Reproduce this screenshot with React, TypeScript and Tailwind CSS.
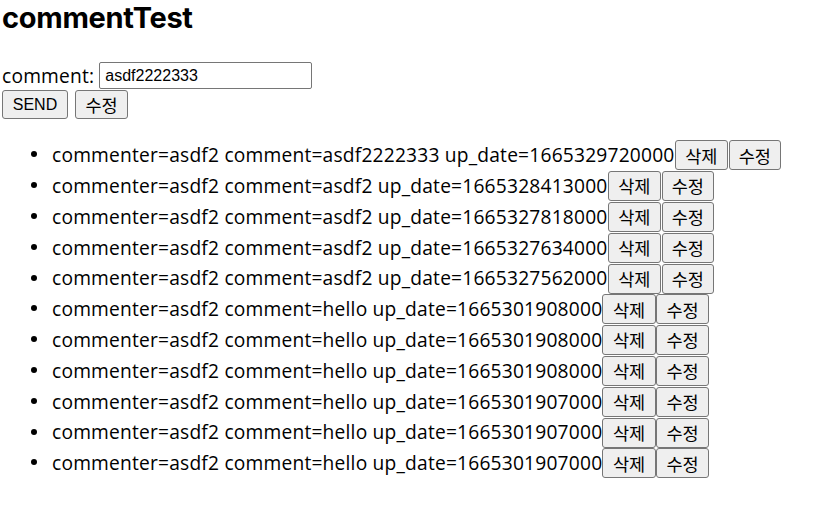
import React from "react";

const rows = [
  { c: "asdf2222333", d: "1665329720000" },
  { c: "asdf2", d: "1665328413000" },
  { c: "asdf2", d: "1665327818000" },
  { c: "asdf2", d: "1665327634000" },
  { c: "asdf2", d: "1665327562000" },
  { c: "hello", d: "1665301908000" },
  { c: "hello", d: "1665301908000" },
  { c: "hello", d: "1665301908000" },
  { c: "hello", d: "1665301907000" },
  { c: "hello", d: "1665301907000" },
  { c: "hello", d: "1665301907000" },
];

const btnBase =
  "shrink-0 flex items-center justify-center bg-[#efefef] border border-[#767676] rounded-[3px] leading-none text-black";
const kr = " text-[17.5px] [font-family:'Noto_Sans_CJK_KR',sans-serif]";

export default function App() {
  return (
    <div className="w-[840px] h-[506px] bg-white text-black pl-[2px] [font-family:'Open_Sans','Noto_Sans_CJK_KR',sans-serif]">
      <h1 className="text-[29px] font-bold leading-[36px] m-0 tracking-[-0.3px] [font-family:Inter,sans-serif]">commentTest</h1>
      <div className="flex items-center mt-[26px] h-[27px]">
        <span className="text-[19.2px] leading-none tracking-[0.2px]">comment:</span>
        <div className="ml-[5px] w-[213px] h-[27px] border border-[#767676] rounded-[2px] flex items-center pl-[5px] text-[16px] [font-family:'Liberation_Sans',sans-serif]">
          asdf2222333
        </div>
      </div>
      <div className="flex items-center gap-[7px] mt-[1px]">
        <button className={btnBase + " w-[66px] h-[29px] text-[16px] [font-family:'Liberation_Sans',sans-serif]"}>SEND</button>
        <button className={btnBase + kr + " w-[53px] h-[29px]"}>수정</button>
      </div>
      <ul className="mt-[21px] flex flex-col">
        {rows.map((r, i) => (
          <li key={i} className="flex items-center h-[30.8px]">
            <span className="shrink-0 ml-[28.5px] w-[6px] h-[6px] rounded-full bg-black mr-[15.5px] mt-[-2px]" />
            <span className="text-[19.2px] leading-none whitespace-pre tracking-[0.2px] mt-[-1px]">
              commenter=asdf2 comment={r.c} up_date={r.d}
            </span>
            <button className={btnBase + kr + " w-[53.5px] h-[30px]"}>삭제</button>
            <button className={btnBase + kr + " w-[52.5px] h-[30px] ml-[0.5px]"}>수정</button>
          </li>
        ))}
      </ul>
    </div>
  );
}
